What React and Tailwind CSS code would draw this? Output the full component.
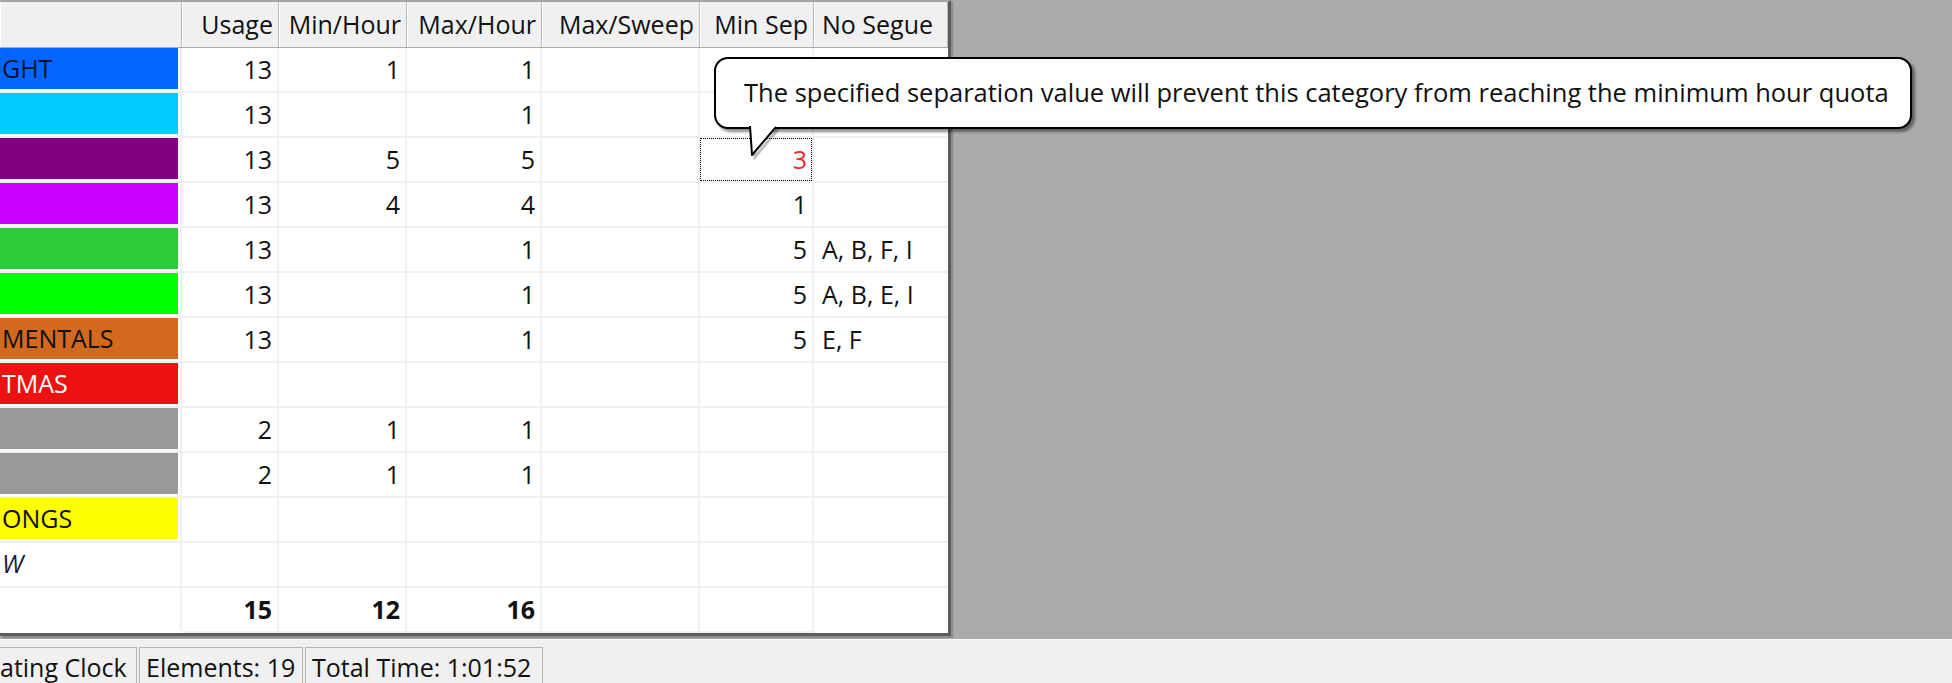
import React from 'react'

// 카테고리 행 데이터
const rows = [
  { label: 'GHT', bg: 'bg-[#0066ff]', fg: 'text-[#0b1530]', usage: '13', min: '1', max: '1' },
  { label: '', bg: 'bg-[#00ccff]', fg: '', usage: '13', min: '', max: '1' },
  { label: '', bg: 'bg-[#800080]', fg: '', usage: '13', min: '5', max: '5', sep: '3', warn: true },
  { label: '', bg: 'bg-[#cc00ff]', fg: '', usage: '13', min: '4', max: '4', sep: '1' },
  { label: '', bg: 'bg-[#2ccc38]', fg: '', usage: '13', min: '', max: '1', sep: '5', segue: 'A, B, F, I' },
  { label: '', bg: 'bg-[#00ff00]', fg: '', usage: '13', min: '', max: '1', sep: '5', segue: 'A, B, E, I' },
  { label: 'MENTALS', bg: 'bg-[#d2691e]', fg: 'text-[#111111]', usage: '13', min: '', max: '1', sep: '5', segue: 'E, F' },
  { label: 'TMAS', bg: 'bg-[#ee1111]', fg: 'text-white', usage: '', min: '', max: '' },
  { label: '', bg: 'bg-[#999999]', fg: '', usage: '2', min: '1', max: '1' },
  { label: '', bg: 'bg-[#999999]', fg: '', usage: '2', min: '1', max: '1' },
  { label: 'ONGS', bg: 'bg-[#ffff00]', fg: 'text-[#111111]', usage: '', min: '', max: '' },
  { label: 'W', bg: 'bg-white', fg: 'text-[#1a1a40] italic', usage: '', min: '', max: '' },
]

const grid = 'grid grid-cols-[182px_97px_128px_135px_158px_114px_134px]'

function NumCell({ children, className = '' }) {
  return (
    <div className={`h-[45px] flex items-center justify-end pr-[5px] border-r-2 border-b-2 border-[#f0f0f0] ${className}`}>
      {children}
    </div>
  )
}

function HeadCell({ children, left }) {
  return (
    <div
      className={`h-[45px] flex items-center bg-[#f0f0f0] border-r border-[#b9b9b9] border-l border-l-white whitespace-nowrap ${
        left ? 'justify-start pl-[7px]' : 'justify-end pr-[5px]'
      }`}
    >
      {children}
    </div>
  )
}

export default function App() {
  return (
    <div className="w-[1952px] h-[683px] overflow-hidden flex flex-col bg-[#ababab] font-['Open_Sans',sans-serif] text-[25px] text-[#111111] leading-none">
      {/* ================= 테이블 영역 ================= */}
      <div className="relative h-[639px] shrink-0">
        <div className="w-[951px] bg-white border-t-2 border-[#a4a4a4] border-r-[3px] border-b-[3px] border-r-[#5c5c5c] border-b-[#5c5c5c] shadow-[2px_2px_1px_#8c8c8c]">
          {/* 헤더 */}
          <div className={`${grid} border-b border-[#a9a9a9]`}>
            <HeadCell />
            <HeadCell>Usage</HeadCell>
            <HeadCell>Min/Hour</HeadCell>
            <HeadCell>Max/Hour</HeadCell>
            <HeadCell>Max/Sweep</HeadCell>
            <HeadCell>Min Sep</HeadCell>
            <HeadCell left>No Segue</HeadCell>
          </div>

          {/* 카테고리 행 */}
          {rows.map((r, i) => (
            <div key={i} className={grid}>
              <div className="h-[45px] pr-[2px] border-r-2 border-b-2 border-[#f0f0f0]">
                <div className={`h-[41px] flex items-center pl-[2px] ${r.bg} ${r.fg}`}>{r.label}</div>
              </div>
              <NumCell>{r.usage}</NumCell>
              <NumCell>{r.min}</NumCell>
              <NumCell>{r.max}</NumCell>
              <NumCell />
              {r.warn ? (
                <div className="h-[45px] border-r-2 border-b-2 border-[#f0f0f0]">
                  <div className="h-full flex items-center justify-end pr-[4px] border border-dotted border-black text-[#ee2a2a]">
                    {r.sep}
                  </div>
                </div>
              ) : (
                <NumCell>{r.sep}</NumCell>
              )}
              <div className="h-[45px] flex items-center pl-[8px] border-b-2 border-[#f0f0f0]">{r.segue}</div>
            </div>
          ))}

          {/* 합계 */}
          <div className={grid}>
            <div className="h-[43px] border-r-2 border-[#f0f0f0]" />
            <NumCell className="font-bold border-b-0 h-[43px]">15</NumCell>
            <NumCell className="font-bold border-b-0 h-[43px]">12</NumCell>
            <NumCell className="font-bold border-b-0 h-[43px]">16</NumCell>
            <NumCell className="border-b-0 h-[43px]" />
            <NumCell className="border-b-0 h-[43px]" />
            <div className="h-[43px]" />
          </div>
        </div>

        {/* 경고 툴팁 */}
        <div className="absolute left-[714px] top-[57px] w-[1198px] h-[72px] flex items-center pl-[28px] text-[25.5px] whitespace-nowrap bg-white border-2 border-black rounded-[14px] shadow-[3px_3px_3px_rgba(0,0,0,0.45)]">
          The specified separation value will prevent this category from reaching the minimum hour quota
        </div>
        <svg className="absolute left-[744px] top-[124px]" width="40" height="36" viewBox="0 0 40 36">
          <polyline points="9,4 11,33 35,4" fill="none" stroke="rgba(0,0,0,0.25)" strokeWidth="3" />
          <polygon points="6,0 6,3 8,31 32,3 32,0" fill="white" />
          <polyline points="6,2 8,31 32,3" fill="none" stroke="black" strokeWidth="2" strokeLinejoin="round" />
        </svg>
      </div>

      {/* ================= 상태 표시줄 ================= */}
      <div className="flex-1 bg-[#f0f0f0] border-t border-[#fafafa] pt-[7px] flex items-start whitespace-nowrap">
        <div className="w-[137px] h-[40px] flex items-center border-t border-r border-[#b4b4b4]">
          ating Clock
        </div>
        <div className="ml-[2px] w-[164px] h-[40px] flex items-center pl-[6px] border-t border-l border-r border-[#b4b4b4]">
          Elements: 19
        </div>
        <div className="ml-[2px] w-[238px] h-[40px] flex items-center pl-[6px] border-t border-l border-r border-[#b4b4b4]">
          Total Time: 1:01:52
        </div>
      </div>
    </div>
  )
}
